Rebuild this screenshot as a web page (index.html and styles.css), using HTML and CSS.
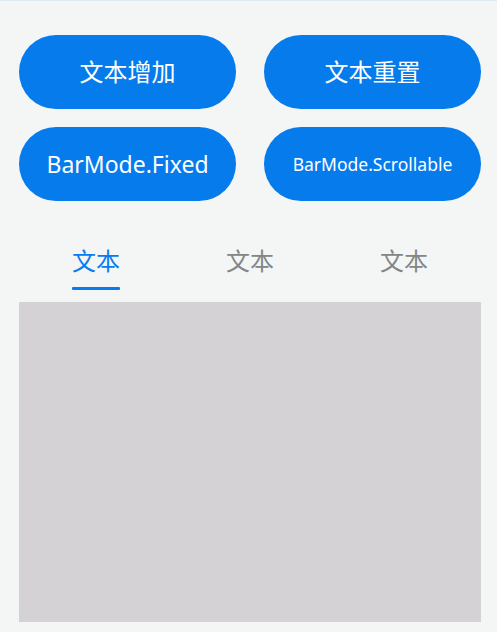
FILE: index.html
```html
<!DOCTYPE html>
<html lang="zh">
<head>
<meta charset="utf-8">
<link rel="stylesheet" href="styles.css">
</head>
<body>
<div class="page">
  <div class="buttons">
    <button class="btn">文本增加</button>
    <button class="btn">文本重置</button>
    <button class="btn btn-latin">BarMode.Fixed</button>
    <button class="btn btn-latin btn-small">BarMode.Scrollable</button>
  </div>
  <div class="tabs">
    <div class="tab active"><span class="tab-label">文本</span><span class="tab-line"></span></div>
    <div class="tab"><span class="tab-label">文本</span><span class="tab-line"></span></div>
    <div class="tab"><span class="tab-label">文本</span><span class="tab-line"></span></div>
  </div>
  <div class="content"></div>
</div>
</body>
</html>
```

FILE: styles.css
```css
html, body {
  margin: 0;
  padding: 0;
  background: #f4f6f6;
}
body {
  width: 497px;
  height: 632px;
  overflow: hidden;
  border-top: 1px solid #dde9f3;
  box-sizing: border-box;
  font-family: "Noto Sans", "Noto Sans CJK SC", sans-serif;
}
.page {
  padding: 34px 16px 0 19px;
}
.buttons {
  display: grid;
  grid-template-columns: 217px 217px;
  column-gap: 28px;
  row-gap: 18px;
}
.btn {
  height: 74px;
  border: none;
  border-radius: 37px;
  background: #057bec;
  color: #ffffff;
  font-family: "Noto Sans CJK SC", sans-serif;
  font-size: 24px;
  font-weight: 400;
  padding: 0 0 4px 0;
}
.btn-latin {
  font-family: "Noto Sans", "Noto Sans CJK SC", sans-serif;
  font-size: 23px;
  padding: 0 0 1px 0;
}
.btn-small {
  font-size: 17.5px;
}
.tabs {
  margin-top: 43px;
  width: 462px;
  display: flex;
}
.tab {
  flex: 1;
  display: flex;
  flex-direction: column;
  align-items: center;
}
.tab-label {
  font-family: "Noto Sans CJK SC", sans-serif;
  font-size: 24px;
  line-height: 32px;
  color: #838685;
}
.tab-line {
  margin-top: 11px;
  width: 48px;
  height: 3px;
  border-radius: 1px;
  background: transparent;
}
.tab.active .tab-label {
  color: #0a7af0;
}
.tab.active .tab-line {
  background: #0a7af0;
}
.content {
  margin-top: 12px;
  width: 462px;
  height: 320px;
  background: #d4d2d5;
}
```
